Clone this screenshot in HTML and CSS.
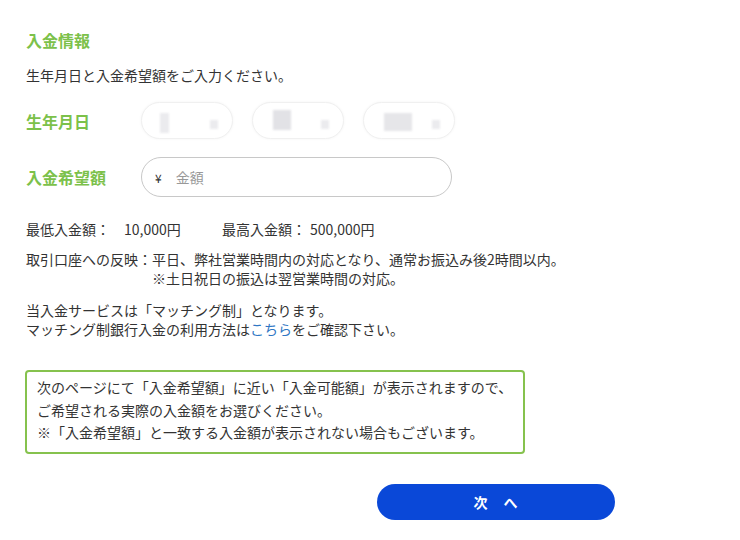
FILE: index.html
```html
<!DOCTYPE html>
<html lang="ja">
<head>
<meta charset="utf-8">
<link rel="stylesheet" href="styles.css">
</head>
<body>
<div class="page">
  <h2 class="title">入金情報</h2>
  <p class="intro">生年月日と入金希望額をご入力ください。</p>

  <div class="row row-birth">
    <div class="label">生年月日</div>
    <div class="pills">
      <div class="pill"><span class="blk b1"></span><span class="blk b2"></span></div>
      <div class="pill"><span class="blk b3"></span><span class="blk b2"></span></div>
      <div class="pill"><span class="blk b4"></span><span class="blk b2"></span></div>
    </div>
  </div>

  <div class="row row-amount">
    <div class="label">入金希望額</div>
    <div class="amount">
      <span class="yen">¥</span>
      <span class="ph">金額</span>
    </div>
  </div>

  <div class="limits">
    <span class="lim-label">最低入金額：</span><span class="lim-val">10,000円</span>
    <span class="lim-label2">最高入金額：</span><span>500,000円</span>
  </div>

  <div class="reflect">
    <div>取引口座への反映：平日、弊社営業時間内の対応となり、通常お振込み後2時間以内。</div>
    <div class="indent">※土日祝日の振込は翌営業時間の対応。</div>
  </div>

  <div class="matching">
    <div>当入金サービスは「マッチング制」となります。</div>
    <div>マッチング制銀行入金の利用方法は<a class="link" href="#">こちら</a>をご確認下さい。</div>
  </div>

  <div class="notice">
    <div>次のページにて「入金希望額」に近い「入金可能額」が表示されますので、</div>
    <div>ご希望される実際の入金額をお選びください。</div>
    <div>※「入金希望額」と一致する入金額が表示されない場合もございます。</div>
  </div>

  <div class="actions">
    <button class="next">次　へ</button>
  </div>
</div>
</body>
</html>
```

FILE: styles.css
```css
* { box-sizing: border-box; }
html, body { margin: 0; padding: 0; background: #fff; }
body {
  font-family: "Noto Sans CJK JP", "Noto Sans", "Liberation Sans", sans-serif;
  color: #333;
  font-size: 14px;
}
.page { padding: 30px 0 0 26px; }
.title {
  margin: 0;
  font-size: 16px;
  line-height: 20px;
  font-weight: 700;
  color: #7cc14a;
}
.intro { margin: 15px 0 0; line-height: 20px; }

.row { display: flex; align-items: center; }
.label {
  width: 115px;
  font-size: 16px;
  font-weight: 700;
  color: #7cc14a;
  line-height: 20px;
}
.row-birth { margin-top: 17px; }
.pills { display: flex; gap: 19px; }
.pill {
  position: relative;
  width: 92px;
  height: 37px;
  border: 1px solid #f0f0f0;
  border-radius: 19px;
  background: #fff;
  box-shadow: 0 0 3px #f4f4f4;
}
.blk {
  position: absolute;
  background: #e6e6ea;
  filter: blur(1.2px);
}
.b1 { left: 18px; top: 10px; width: 9px; height: 20px; background: #ebebee; }
.b2 { right: 14px; top: 17px; width: 8px; height: 9px; background: #ebebee; }
.b3 { left: 20px; top: 7px; width: 18px; height: 20px; background: #e2e2e6; }
.b4 { left: 20px; top: 10px; width: 28px; height: 18px; background: #e6e6e9; }

.row-amount { margin-top: 18px; }
.amount {
  width: 311px;
  height: 40px;
  border: 1px solid #c8c8c8;
  border-radius: 20px;
  display: flex;
  align-items: center;
  padding-left: 13px;
}
.yen { font-size: 12px; color: #333; }
.ph { margin-left: 14px; color: #999; font-size: 14px; }

.limits { margin-top: 22px; line-height: 20px; display: flex; }
.lim-label { width: 98px; }
.lim-val { width: 98px; }
.lim-label2 { width: 88px; }

.reflect { margin-top: 11px; line-height: 19px; }
.indent { padding-left: 126px; }

.matching { margin-top: 13px; line-height: 19px; }
.link { color: #2f77c4; text-decoration: none; }

.notice {
  margin-top: 31px;
  margin-left: -1px;
  width: 500px;
  border: 2px solid #86c24e;
  border-radius: 4px;
  padding: 4px 10px 8px 10px;
  line-height: 22.5px;
}

.actions { margin-top: 30px; padding-left: 351px; }
.next {
  width: 238px;
  height: 36px;
  border: none;
  border-radius: 18px;
  background: #0a48d8;
  color: #fff;
  font-family: inherit;
  font-size: 14px;
  font-weight: 700;
  letter-spacing: 1px;
  cursor: pointer;
}
```
